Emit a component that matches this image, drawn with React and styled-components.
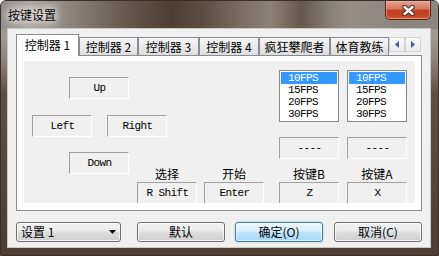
import React from "react";
import styled, { createGlobalStyle } from "styled-components";

const CJK = `"Noto Sans CJK SC", "Noto Sans", sans-serif`;
const MONO = `"Liberation Mono", "Noto Sans CJK SC", monospace`;

const GlobalStyle = createGlobalStyle`
  html, body {
    margin: 0;
    padding: 0;
    background: #ffffff;
  }
  body {
    width: 439px;
    height: 256px;
    overflow: hidden;
  }
  * {
    box-sizing: border-box;
  }
`;

const tabs = ["控制器 1", "控制器 2", "控制器 3", "控制器 4", "疯狂攀爬者", "体育教练"];
const tabWidths = [63, 59, 61, 60, 71, 59];
const fpsItems = ["10FPS", "15FPS", "20FPS", "30FPS"];
const keys = [
  { label: "选择", value: "R Shift" },
  { label: "开始", value: "Enter" },
  { label: "按键B", value: "Z" },
  { label: "按键A", value: "X" },
];

const App = () => {
  return (
    <>
      <GlobalStyle />
      <Window>
        <TitleBar>
          <Title>按键设置</Title>
          <CloseButton>
            <svg width="13" height="11" viewBox="0 0 13 11">
              <path d="M2.5 2 L10.5 9 M10.5 2 L2.5 9" stroke="#4b2c22" strokeWidth="4.4" strokeLinecap="round" />
              <path d="M2.5 2 L10.5 9 M10.5 2 L2.5 9" stroke="#ffffff" strokeWidth="2.4" strokeLinecap="round" />
            </svg>
          </CloseButton>
        </TitleBar>

        <Client>
          <TabStrip>
            {tabs.map((t, i) => (
              <Tab key={t} $active={i === 0} $w={tabWidths[i]}>
                {t}
              </Tab>
            ))}
            <Arrows>
              <ArrowButton>
                <svg width="4" height="7" viewBox="0 0 4 7">
                  <path d="M4 0 L0 3.5 L4 7 Z" fill="#2f63b8" />
                </svg>
              </ArrowButton>
              <ArrowButton>
                <svg width="4" height="7" viewBox="0 0 4 7">
                  <path d="M0 0 L4 3.5 L0 7 Z" fill="#2f63b8" />
                </svg>
              </ArrowButton>
            </Arrows>
          </TabStrip>

          <TabPage>
            <Pad>
              <DPad>
                <KeyBox $col="2 / 5" $row="1">Up</KeyBox>
                <KeyBox $col="1 / 3" $row="3">Left</KeyBox>
                <KeyBox $col="4 / 6" $row="3">Right</KeyBox>
                <KeyBox $col="2 / 5" $row="5">Down</KeyBox>
              </DPad>

              {[4, 5].map((c) => (
                <FpsStack key={c} $col={c}>
                  <ListBox>
                    {fpsItems.map((f, i) => (
                      <ListItem key={f} $selected={i === 0}>
                        {f}
                      </ListItem>
                    ))}
                  </ListBox>
                  <KeyBox>----</KeyBox>
                </FpsStack>
              ))}

              {keys.map((k, i) => (
                <KeyCell key={k.label} $col={i + 2}>
                  <KeyLabel>{k.label}</KeyLabel>
                  <KeyBox>{k.value}</KeyBox>
                </KeyCell>
              ))}
            </Pad>
          </TabPage>

          <BottomRow>
            <Combo>
              <span>设置 1</span>
              <svg width="7" height="4" viewBox="0 0 7 4">
                <path d="M0 0 L7 0 L3.5 4 Z" fill="#000" />
              </svg>
            </Combo>
            <Button $gap={16}>默认</Button>
            <Button $gap={10} $default>
              确定(O)
            </Button>
            <Button $gap={11}>取消(C)</Button>
          </BottomRow>
        </Client>
      </Window>
    </>
  );
};

export default App;

// Styled Components
const Window = styled.div`
  width: 439px;
  height: 256px;
  border: 1px solid #3a2f27;
  border-radius: 6px 6px 0 0;
  background: linear-gradient(
    180deg,
    #8d867f 0px,
    #a29b94 34px,
    #8b7f74 62px,
    #5f4f41 92px,
    #4e3e31 100%
  );
  display: flex;
  flex-direction: column;
  overflow: hidden;
  font-family: ${CJK};
  font-size: 12px;
  color: #000;
`;

const TitleBar = styled.div`
  height: 28px;
  display: flex;
  align-items: flex-start;
  background: linear-gradient(
    90deg,
    #928d88 0px,
    #aaa5a0 30px,
    #857b71 80px,
    #62564a 130px,
    #4d3f31 170px,
    #5a4c3f 200px,
    #7a6e63 240px,
    #8c8176 270px,
    #66584b 300px,
    #8a8179 330px,
    #958e87 350px,
    #8b857f 400px,
    #8d8781 100%
  );
`;

const Title = styled.div`
  padding-left: 7px;
  line-height: 28px;
  font-size: 12px;
  color: #000;
  text-shadow: 0 0 6px #ffffff, 0 0 10px rgba(255, 255, 255, 0.9), 0 0 14px rgba(255, 255, 255, 0.7);
`;

const CloseButton = styled.div`
  margin-left: auto;
  margin-right: 7px;
  width: 46px;
  height: 19px;
  border: 1px solid #5c2517;
  border-top: none;
  border-radius: 0 0 5px 5px;
  background: linear-gradient(180deg, #e3a291 0%, #d67a62 42%, #c2401f 52%, #c8452a 85%, #d86a3e 100%);
  box-shadow: inset 0 0 0 1px rgba(255, 200, 180, 0.45);
  display: flex;
  align-items: center;
  justify-content: center;
`;

const Client = styled.div`
  flex: 1;
  margin: 0 8px 8px 7px;
  background: #f0f0f0;
  box-shadow: 0 0 0 1px #cdc7c1;
  display: flex;
  flex-direction: column;
  padding: 5px 0 0 8px;
`;

const TabStrip = styled.div`
  width: 406px;
  height: 21px;
  display: flex;
  align-items: flex-end;
  position: relative;
  z-index: 1;
`;

const Tab = styled.div`
  width: ${(p) => p.$w}px;
  height: ${(p) => (p.$active ? 22 : 18)}px;
  margin-bottom: ${(p) => (p.$active ? -1 : 0)}px;
  border: 1px solid #898c95;
  border-bottom: none;
  background: ${(p) =>
    p.$active ? "#ffffff" : "linear-gradient(180deg, #f5f5f5 0%, #ebebeb 50%, #dddddd 100%)"};
  font-size: 12px;
  line-height: ${(p) => (p.$active ? 20 : 18)}px;
  text-align: center;
  white-space: nowrap;
`;

const Arrows = styled.div`
  align-self: flex-start;
  margin-top: 3px;
  display: flex;
`;

const ArrowButton = styled.div`
  width: 16px;
  height: 15px;
  border: 1px solid #d2d2d2;
  background: linear-gradient(180deg, #fbfbfb, #ececec);
  display: flex;
  align-items: center;
  justify-content: center;
`;

const TabPage = styled.div`
  width: 406px;
  height: 156px;
  border: 1px solid #898c95;
  background: #ffffff;
  padding: 5px 6px 7px 7px;
`;

const Pad = styled.div`
  width: 391px;
  height: 142px;
  overflow: hidden;
  background: #f0f0f0;
  padding: 9px 0 0 8px;
  display: grid;
  grid-template-columns: 105px 67px 75px 68px 60px;
  grid-template-rows: auto auto;
  align-items: start;
`;

const DPad = styled.div`
  grid-column: 1;
  grid-row: 1 / span 2;
  width: 135px;
  margin-top: 7px;
  display: grid;
  grid-template-columns: 37px 23px 15px 22px 38px;
  grid-template-rows: 22px 16px 22px 15px 22px;
`;

const KeyBox = styled.div`
  grid-column: ${(p) => p.$col || "auto"};
  grid-row: ${(p) => p.$row || "auto"};
  width: 60px;
  height: 22px;
  border-top: 1px solid #a0a0a0;
  border-left: 1px solid #a0a0a0;
  border-right: 1px solid #ffffff;
  border-bottom: 1px solid #ffffff;
  display: flex;
  align-items: center;
  justify-content: center;
  font-family: ${MONO};
  font-size: 11px;
  letter-spacing: -0.6px;
  padding-left: 1px;
  color: #000;
`;

const FpsStack = styled.div`
  grid-column: ${(p) => p.$col};
  grid-row: 1;
  display: flex;
  flex-direction: column;
  gap: 15px;
`;

const ListBox = styled.div`
  width: 60px;
  height: 52px;
  border: 1px solid #828790;
  background: #ffffff;
  padding: 1px;
`;

const ListItem = styled.div`
  height: 12px;
  line-height: 12px;
  padding-left: 7px;
  font-family: ${MONO};
  font-size: 11px;
  letter-spacing: -0.6px;
  background: ${(p) => (p.$selected ? "#3399ff" : "transparent")};
  color: ${(p) => (p.$selected ? "#ffffff" : "#000000")};
`;

const KeyCell = styled.div`
  grid-column: ${(p) => p.$col};
  grid-row: 2;
  margin-top: 8px;
  display: flex;
  flex-direction: column;
`;

const KeyLabel = styled.div`
  width: 60px;
  height: 14px;
  line-height: 14px;
  margin-bottom: 1px;
  text-align: center;
  font-size: 12px;
`;

const BottomRow = styled.div`
  margin-top: 11px;
  display: flex;
  align-items: center;
`;

const buttonFace = `
  height: 20px;
  border: 1px solid #707070;
  border-radius: 3px;
  background: linear-gradient(180deg, #f2f2f2 0%, #ebebeb 45%, #dddddd 50%, #cfcfcf 100%);
  box-shadow: inset 0 0 0 1px rgba(255, 255, 255, 0.75);
  font-size: 12px;
`;

const Combo = styled.div`
  ${buttonFace}
  width: 105px;
  display: flex;
  align-items: center;
  justify-content: space-between;
  padding: 0 4px 0 4px;
  line-height: 18px;
`;

const Button = styled.div`
  ${buttonFace}
  width: 88px;
  margin-left: ${(p) => p.$gap}px;
  line-height: 18px;
  text-align: center;
  ${(p) =>
    p.$default &&
    `
    border-color: #3c7fb1;
    background: linear-gradient(180deg, #eaf6fd 0%, #d9f0fc 45%, #bee6fd 50%, #a7d9f5 100%);
    box-shadow: inset 0 0 0 1px rgba(255, 255, 255, 0.6), 0 0 2px rgba(60, 127, 177, 0.5);
  `}
`;
